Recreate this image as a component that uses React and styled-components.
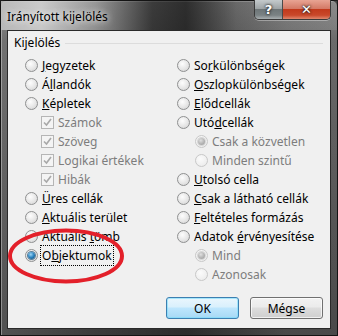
import React from 'react';
import styled, { createGlobalStyle } from 'styled-components';

const GlobalStyle = createGlobalStyle`
  html, body {
    margin: 0;
    padding: 0;
    background: #1e1e1e;
  }
  body {
    width: 338px;
    height: 336px;
    overflow: hidden;
    font-family: "Noto Sans", "Open Sans", sans-serif;
    font-size: 12px;
  }
`;

const Frame = styled.div`
  position: relative;
  width: 338px;
  height: 336px;
  box-sizing: border-box;
  display: flex;
  flex-direction: column;
  padding: 0 6px 6px;
  border: 1px solid #141414;
  border-radius: 6px 6px 0 0;
  background:
    linear-gradient(to right, rgba(255,255,255,0.12), rgba(0,0,0,0) 30%, rgba(0,0,0,0.25) 55%, rgba(255,255,255,0.08) 85%),
    linear-gradient(to bottom, #7d7d7d 0px, #5e5e5e 40px, #4a4a4a 200px, #3a3a3a 100%);
  box-shadow: inset 1px 1px 0 rgba(255,255,255,0.35);
`;

const TitleBar = styled.div`
  height: 29px;
  display: flex;
  align-items: flex-start;
  justify-content: space-between;
  margin: 0 -6px;
  padding: 0 6px 0 6px;
  background: linear-gradient(to right,
    rgba(190,190,190,0.9) 0%,
    rgba(215,215,215,0.85) 12%,
    rgba(170,170,170,0.6) 28%,
    rgba(40,40,40,0.7) 45%,
    rgba(30,30,30,0.75) 55%,
    rgba(90,90,90,0.4) 70%,
    rgba(150,150,150,0.3) 100%);
`;

const Title = styled.span`
  margin-top: 7px;
  color: #000;
  font-size: 12px;
  text-shadow: 0 0 6px rgba(255,255,255,0.9), 0 0 10px rgba(255,255,255,0.6);
`;

const CaptionButtons = styled.div`
  display: flex;
  margin-top: -1px;
  margin-right: 0;
  border: 1px solid #3a3a3a;
  border-top: none;
  border-radius: 0 0 5px 5px;
  overflow: hidden;
  box-shadow: 0 1px 0 rgba(255,255,255,0.35);
`;

const CaptionButton = styled.div`
  height: 19px;
  width: ${p => p.$w}px;
  display: flex;
  align-items: center;
  justify-content: center;
  color: #fff;
  font-family: "DejaVu Sans", sans-serif;
  font-weight: bold;
  font-size: ${p => p.$fs}px;
  text-shadow: 0 0 2px #222, 0 0 3px #222;
  background: ${p => p.$red
    ? 'linear-gradient(to bottom, #e8a493 0%, #d47a66 45%, #c23a1c 50%, #c9482a 80%, #e0886e 100%)'
    : 'linear-gradient(to bottom, #c4cacc 0%, #9ea4a6 45%, #6e7678 50%, #7a8284 80%, #a9afb1 100%)'};
  border-left: ${p => p.$red ? '1px solid #4a4a4a' : 'none'};
`;

const Client = styled.div`
  position: relative;
  flex: 1;
  display: flex;
  flex-direction: column;
  background: #f0f0f0;
  border: 1px solid #2a2a2a;
  padding: 4px 7px 9px 6px;
  color: #000;
`;

const GroupHeader = styled.div`
  display: flex;
  align-items: center;
  height: 15px;
  gap: 5px;
  &::after {
    content: '';
    flex: 1;
    height: 1px;
    background: #dcdcdc;
    margin-top: 1px;
  }
`;

const Columns = styled.div`
  display: grid;
  grid-template-columns: 152px 1fr;
  margin-top: 6px;
  padding-left: 11px;
`;

const Column = styled.div`
  display: flex;
  flex-direction: column;
`;

const Row = styled.div`
  display: flex;
  align-items: center;
  height: 19px;
  padding-left: ${p => p.$indent || 0}px;
  color: ${p => p.$disabled ? '#7d7d7d' : '#000'};
  white-space: nowrap;
`;

const Radio = styled.span`
  box-sizing: border-box;
  width: 13px;
  height: 13px;
  border-radius: 50%;
  margin-right: 4px;
  flex: none;
  display: flex;
  align-items: center;
  justify-content: center;
  border: 1px solid ${p => p.$disabled ? '#c8c8c8' : '#8f9091'};
  background: ${p => p.$disabled
    ? 'radial-gradient(circle at 40% 35%, #fbfbfb 0%, #eeeeee 70%, #e4e4e4 100%)'
    : 'radial-gradient(circle at 40% 35%, #fdfdfd 0%, #e6e6e6 55%, #cfcfcf 100%)'};
  &::after {
    content: '';
    display: ${p => p.$checked ? 'block' : 'none'};
    width: 7px;
    height: 7px;
    border-radius: 50%;
    background: ${p => p.$disabled
      ? 'radial-gradient(circle at 40% 35%, #e0e0e0 0%, #b0b0b0 60%, #9a9a9a 100%)'
      : 'radial-gradient(circle at 40% 35%, #9fd6f5 0%, #2b83c0 50%, #0a3e66 100%)'};
    box-shadow: ${p => p.$disabled ? '0 0 0 1px #d6d6d6' : '0 0 0 1px #5a7f9a'};
  }
`;

const Check = styled.span`
  box-sizing: border-box;
  width: 13px;
  height: 13px;
  margin-right: 4px;
  flex: none;
  border: 1px solid #b5b5b5;
  background: #f4f4f4;
  display: flex;
  align-items: center;
  justify-content: center;
`;

const Label = styled.span`
  padding: 1px 1px;
  border: 1px dotted ${p => p.$focus ? '#000' : 'transparent'};
  margin-left: -2px;
  u {
    text-decoration: underline;
    text-underline-offset: 1px;
  }
`;

const ButtonBar = styled.div`
  margin-top: auto;
  display: flex;
  justify-content: flex-end;
  gap: 11px;
`;

const Button = styled.button`
  box-sizing: border-box;
  width: 73px;
  height: 22px;
  padding: 0;
  font-family: inherit;
  font-size: 12px;
  color: #000;
  border-radius: 3px;
  border: 1px solid ${p => p.$default ? '#3c7fb1' : '#707070'};
  background: ${p => p.$default
    ? 'linear-gradient(to bottom, #eaf6fd 0%, #d9f0fc 45%, #bee6fd 50%, #a7d9f5 100%)'
    : 'linear-gradient(to bottom, #f2f2f2 0%, #ebebeb 45%, #dddddd 50%, #cfcfcf 100%)'};
  box-shadow: inset 0 0 0 1px ${p => p.$default ? 'rgba(120,220,250,0.6)' : 'rgba(255,255,255,0.7)'};
`;

const Ellipse = styled.svg`
  position: absolute;
  left: 0;
  top: 0;
  pointer-events: none;
`;

const Tick = () => (
  <svg width="9" height="9" viewBox="0 0 9 9">
    <path d="M1 4.5 L3.5 7 L8 1" fill="none" stroke="#a8a8a8" strokeWidth="1.6" />
  </svg>
);

const left = [
  { t: 'radio', label: <><u>J</u>egyzetek</> },
  { t: 'radio', label: <>Á<u>l</u>landók</> },
  { t: 'radio', label: <><u>K</u>épletek</> },
  { t: 'check', label: 'Számok', indent: 16, disabled: true },
  { t: 'check', label: 'Szöveg', indent: 16, disabled: true },
  { t: 'check', label: 'Logikai értékek', indent: 16, disabled: true },
  { t: 'check', label: 'Hibák', indent: 16, disabled: true },
  { t: 'radio', label: <><u>Ü</u>res cellák</> },
  { t: 'radio', label: <><u>A</u>ktuális terület</> },
  { t: 'radio', label: <>Aktuális <u>t</u>ömb</> },
  { t: 'radio', label: <>O<u>b</u>jektumok</>, checked: true, focus: true },
];

const right = [
  { t: 'radio', label: <>So<u>r</u>különbségek</> },
  { t: 'radio', label: <><u>O</u>szlopkülönbségek</> },
  { t: 'radio', label: <><u>E</u>lődcellák</> },
  { t: 'radio', label: <>Utó<u>d</u>cellák</> },
  { t: 'radio', label: 'Csak a közvetlen', indent: 18, disabled: true, checked: true },
  { t: 'radio', label: 'Minden szintű', indent: 18, disabled: true },
  { t: 'radio', label: <><u>U</u>tolsó cella</> },
  { t: 'radio', label: <><u>C</u>sak a látható cellák</> },
  { t: 'radio', label: <><u>F</u>eltételes formázás</> },
  { t: 'radio', label: <>Adatok <u>é</u>rvényesítése</> },
  { t: 'radio', label: 'Mind', indent: 18, disabled: true, checked: true },
  { t: 'radio', label: 'Azonosak', indent: 18, disabled: true },
];

const Option = ({ item }) => (
  <Row $indent={item.indent} $disabled={item.disabled}>
    {item.t === 'check'
      ? <Check><Tick /></Check>
      : <Radio $checked={item.checked} $disabled={item.disabled} />}
    <Label $focus={item.focus}>{item.label}</Label>
  </Row>
);

const App = () => (
  <>
    <GlobalStyle />
    <Frame>
      <TitleBar>
        <Title>Irányított kijelölés</Title>
        <CaptionButtons>
          <CaptionButton $w={27} $fs={13}>?</CaptionButton>
          <CaptionButton $w={47} $fs={13} $red>✕</CaptionButton>
        </CaptionButtons>
      </TitleBar>
      <Client>
        <GroupHeader>Kijelölés</GroupHeader>
        <Columns>
          <Column>
            {left.map((item, i) => <Option key={i} item={item} />)}
          </Column>
          <Column>
            {right.map((item, i) => <Option key={i} item={item} />)}
          </Column>
        </Columns>
        <ButtonBar>
          <Button $default>OK</Button>
          <Button>Mégse</Button>
        </ButtonBar>
        <Ellipse width="324" height="299">
          <ellipse cx="58" cy="225" rx="56" ry="25.5" fill="none" stroke="#e3202a" strokeWidth="4" />
        </Ellipse>
      </Client>
    </Frame>
  </>
);

export default App;
